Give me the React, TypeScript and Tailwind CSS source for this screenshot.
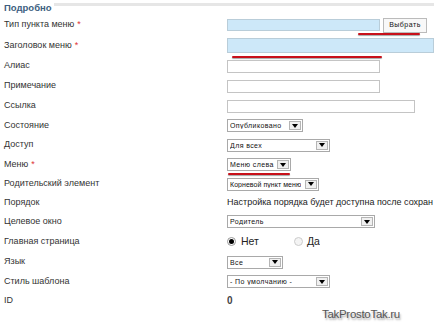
import React from "react";

function Select({
  value,
  width,
  tight,
}: {
  value: string;
  width: string;
  tight?: boolean;
}) {
  return (
    <div
      className={`${width} h-[13px] flex items-center justify-between border border-[#a9a9a9] bg-white pl-[2px] pr-[1px] text-[7px] ${tight ? "tracking-[0.05px]" : "tracking-[0.4px]"} text-[#111] leading-none`}
    >
      <span className="whitespace-nowrap overflow-hidden min-w-0">{value}</span>
      <span className="ml-[1px] w-[12px] h-[9px] border border-[#b5b5b5] bg-[#f0f0f0] flex items-center justify-center shrink-0">
        <span className="w-0 h-0 border-l-[3px] border-r-[3px] border-t-[4px] border-l-transparent border-r-transparent border-t-black" />
      </span>
    </div>
  );
}

function Row({
  label,
  required,
  h,
  children,
}: {
  label: string;
  required?: boolean;
  h: string;
  children?: React.ReactNode;
}) {
  return (
    <div className={`flex items-center ${h}`}>
      <div className="w-[227px] shrink-0 pl-[4px] text-[9px] text-[#333]">
        {label}
        {required && <span className="text-[#d33] ml-[3px]">*</span>}
      </div>
      <div className="flex items-center min-w-0 overflow-hidden">{children}</div>
    </div>
  );
}

function Underline({ cls }: { cls: string }) {
  return (
    <div
      className={`absolute h-[2px] bg-[#c8101a] rounded-full shadow-[0_1px_1px_rgba(0,0,0,0.35)] ${cls}`}
    />
  );
}

export default function App() {
  return (
    <div
      className="relative w-[434px] h-[324px] bg-white overflow-hidden"
      style={{ fontFamily: "'Liberation Sans', Arial, sans-serif" }}
    >
      <div className="flex items-start h-[15px] pt-[2px]">
        <span className="ml-[4px] pr-[2px] text-[9.5px] font-bold text-[#3e5f7f] leading-[11px]">
          Подробно
        </span>
        <div className="flex-1 mt-[1px] h-[3px] bg-[#e6e6e6]" />
      </div>

      <Row label="Тип пункта меню" required h="h-[20px]">
        <div className="w-[153px] h-[12px] border border-[#b9cdd9] bg-[#cde8f9]" />
        <div className="ml-[3px] w-[44px] h-[15px] border border-[#bbb] bg-[#f8f8f8] flex items-center justify-center text-[7px] tracking-[0.5px] text-[#111]">
          Выбрать
        </div>
      </Row>
      <Row label="Заголовок меню" required h="h-[21px]">
        <div className="w-[220px] h-[15px] border border-[#b9cdd9] bg-[#cde8f9]" />
      </Row>
      <Row label="Алиас" h="h-[20px]">
        <div className="w-[153px] h-[13px] border border-[#c4c4c4] bg-white" />
      </Row>
      <Row label="Примечание" h="h-[20px]">
        <div className="w-[153px] h-[13px] border border-[#c4c4c4] bg-white" />
      </Row>
      <Row label="Ссылка" h="h-[20px]">
        <div className="w-[188px] h-[13px] border border-[#c4c4c4] bg-white" />
      </Row>
      <Row label="Состояние" h="h-[19px]">
        <Select value="Опубликовано" width="w-[76px]" />
      </Row>
      <Row label="Доступ" h="h-[20px]">
        <Select value="Для всех" width="w-[103px]" />
      </Row>
      <Row label="Меню" required h="h-[19px]">
        <Select value="Меню слева" width="w-[64px]" />
      </Row>
      <Row label="Родительский элемент" h="h-[20px]">
        <Select value="Корневой пункт меню" width="w-[92px]" tight />
      </Row>
      <Row label="Порядок" h="h-[18px]">
        <span className="whitespace-nowrap text-[9px] text-[#222]">
          Настройка порядка будет доступна после сохран
        </span>
      </Row>
      <Row label="Целевое окно" h="h-[19px]">
        <Select value="Родитель" width="w-[148px]" />
      </Row>
      <Row label="Главная страница" h="h-[21px]">
        <span className="w-[9px] h-[9px] rounded-full border border-[#999] bg-white flex items-center justify-center">
          <span className="w-[5px] h-[5px] rounded-full bg-black" />
        </span>
        <span className="ml-[5px] text-[10.5px] text-[#222]">Нет</span>
        <span className="ml-[35px] w-[9px] h-[9px] rounded-full border border-[#ccc] bg-[#f4f4f4]" />
        <span className="ml-[4px] text-[10.5px] text-[#222]">Да</span>
      </Row>
      <Row label="Язык" h="h-[20px]">
        <Select value="Все" width="w-[56px]" />
      </Row>
      <Row label="Стиль шаблона" h="h-[19px]">
        <Select value="- По умолчанию -" width="w-[103px]" />
      </Row>
      <Row label="ID" h="h-[19px]">
        <span className="text-[10px] font-bold text-[#444]">0</span>
      </Row>

      <Underline cls="left-[358px] top-[33px] w-[62px]" />
      <Underline cls="left-[232px] top-[56px] w-[150px]" />
      <Underline cls="left-[228px] top-[173px] w-[62px]" />

      <div
        className="absolute left-[322px] top-[306px] text-[11.5px] tracking-[-0.3px] text-[#555]"
        style={{ textShadow: "1px 2px 2px rgba(0,0,0,0.35)" }}
      >
        TakProstoTak.ru
      </div>
    </div>
  );
}
